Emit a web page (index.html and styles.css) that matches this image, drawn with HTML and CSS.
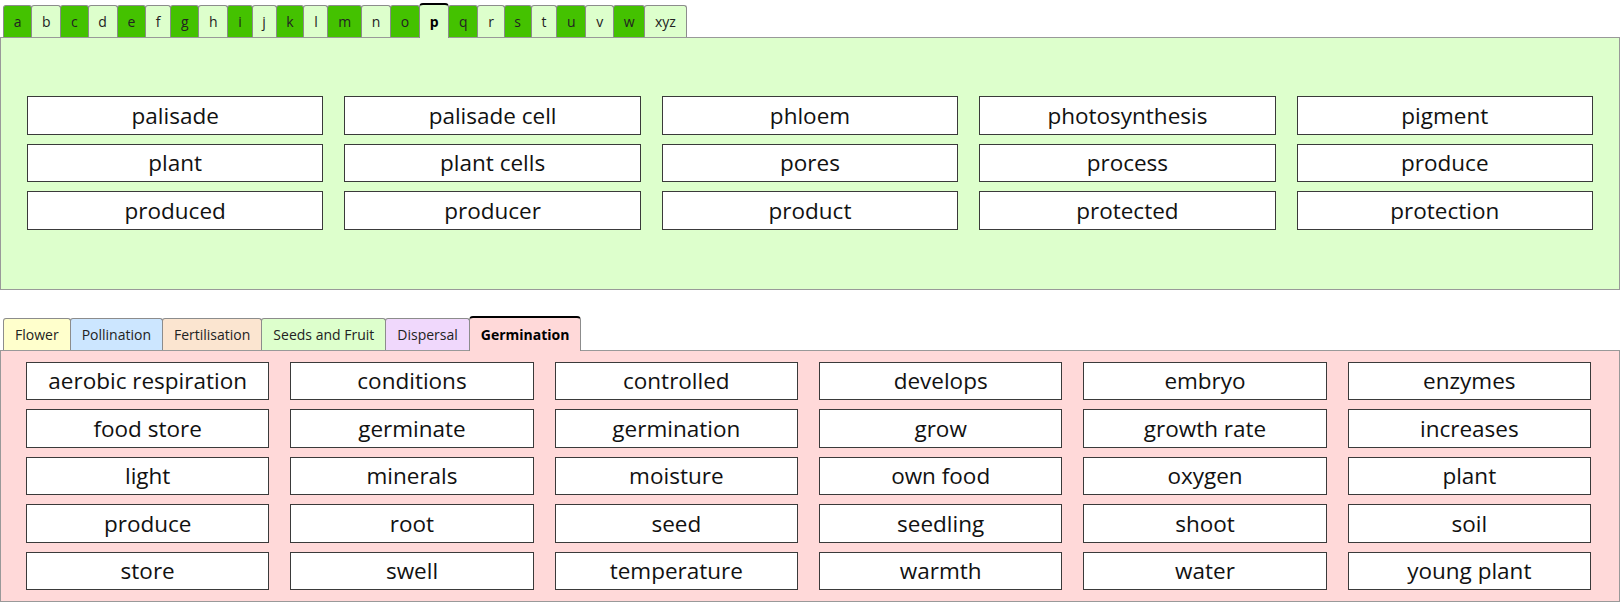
FILE: index.html
```html
<!DOCTYPE html>
<html lang="en">
<head>
	<meta charset="UTF-8">
	<title>Word bank</title>
	<link rel="stylesheet" href="styles.css">
</head>
<body>
	<div class="tabs alpha">
		<span class="tab dark">a</span>
		<span class="tab">b</span>
		<span class="tab dark">c</span>
		<span class="tab">d</span>
		<span class="tab dark">e</span>
		<span class="tab">f</span>
		<span class="tab dark">g</span>
		<span class="tab">h</span>
		<span class="tab dark">i</span>
		<span class="tab">j</span>
		<span class="tab dark">k</span>
		<span class="tab">l</span>
		<span class="tab dark">m</span>
		<span class="tab">n</span>
		<span class="tab dark">o</span>
		<span class="tab active">p</span>
		<span class="tab dark">q</span>
		<span class="tab">r</span>
		<span class="tab dark">s</span>
		<span class="tab">t</span>
		<span class="tab dark">u</span>
		<span class="tab">v</span>
		<span class="tab dark">w</span>
		<span class="tab">xyz</span>
	</div>
	<div class="panel alpha-panel">
		<div class="words five">
			<div class="word">palisade</div>
			<div class="word">palisade cell</div>
			<div class="word">phloem</div>
			<div class="word">photosynthesis</div>
			<div class="word">pigment</div>
			<div class="word">plant</div>
			<div class="word">plant cells</div>
			<div class="word">pores</div>
			<div class="word">process</div>
			<div class="word">produce</div>
			<div class="word">produced</div>
			<div class="word">producer</div>
			<div class="word">product</div>
			<div class="word">protected</div>
			<div class="word">protection</div>
		</div>
	</div>

	<div class="tabs topics">
		<span class="tab flower">Flower</span>
		<span class="tab pollination">Pollination</span>
		<span class="tab fertilisation">Fertilisation</span>
		<span class="tab seeds">Seeds and Fruit</span>
		<span class="tab dispersal">Dispersal</span>
		<span class="tab germination active">Germination</span>
	</div>
	<div class="panel topic-panel">
		<div class="words six">
			<div class="word">aerobic respiration</div>
			<div class="word">conditions</div>
			<div class="word">controlled</div>
			<div class="word">develops</div>
			<div class="word">embryo</div>
			<div class="word">enzymes</div>
			<div class="word">food store</div>
			<div class="word">germinate</div>
			<div class="word">germination</div>
			<div class="word">grow</div>
			<div class="word">growth rate</div>
			<div class="word">increases</div>
			<div class="word">light</div>
			<div class="word">minerals</div>
			<div class="word">moisture</div>
			<div class="word">own food</div>
			<div class="word">oxygen</div>
			<div class="word">plant</div>
			<div class="word">produce</div>
			<div class="word">root</div>
			<div class="word">seed</div>
			<div class="word">seedling</div>
			<div class="word">shoot</div>
			<div class="word">soil</div>
			<div class="word">store</div>
			<div class="word">swell</div>
			<div class="word">temperature</div>
			<div class="word">warmth</div>
			<div class="word">water</div>
			<div class="word">young plant</div>
		</div>
	</div>
</body>
</html>
```

FILE: styles.css
```css
body{
	margin: 0;
	padding: 0;
	background-color: #FFFFFF;
	font-family: "Open Sans", "Noto Sans", sans-serif;
	color: #111;
}

/* tab rows */
.tabs{
	display: flex;
	align-items: flex-end;
	padding-left: 3px;
	height: 37px;
}

.topics{
	margin-top: 26px;
	height: 34px;
}

.tab{
	box-sizing: border-box;
	height: 32px;
	display: flex;
	align-items: center;
	padding: 0 9.75px;
	margin-right: -1px;
	border: 1px solid #8C8C8C;
	border-bottom: none;
	border-radius: 3px 3px 0 0;
	font-size: 14px;
	color: #222;
	background-color: #DDFFCC;
}

.topics .tab{
	padding: 0 11px;
}

.tab.dark{
	background-color: #44C200;
}

.tab.active{
	height: 35px;
	margin-bottom: -1px;
	border-top: 2px solid #000;
	border-radius: 4px 4px 0 0;
	font-weight: bold;
	color: #000;
	position: relative;
	z-index: 1;
}

.flower{ background-color: #FFFFCC; }
.pollination{ background-color: #CCE6FF; }
.fertilisation{ background-color: #FBE5D0; }
.seeds{ background-color: #DDFFCC; }
.dispersal{ background-color: #F0D8FC; }
.tab.germination{ background-color: #FFD9D9; }

/* panels */
.panel{
	border: 1px solid #999;
}

.alpha-panel{
	background-color: #DDFFCC;
	padding: 58px 26px 59px 26px;
}

.topic-panel{
	background-color: #FFD9D9;
	padding: 11px 28px 11px 25px;
}

.words{
	display: grid;
	column-gap: 21px;
	row-gap: 9px;
}

.five{
	grid-template-columns: repeat(5, 1fr);
}

.six{
	grid-template-columns: repeat(6, 1fr);
}

.word{
	box-sizing: border-box;
	height: 38.5px;
	display: flex;
	align-items: center;
	justify-content: center;
	background-color: #FFFFFF;
	border: 1px solid #3A3A3A;
	font-size: 22.5px;
	white-space: nowrap;
}
```
